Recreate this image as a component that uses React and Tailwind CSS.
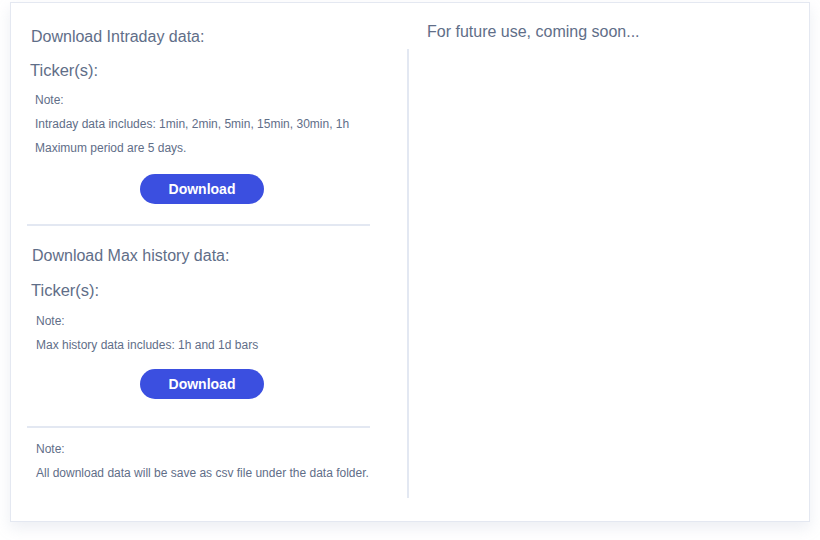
import React from 'react';

const font = { fontFamily: '"Liberation Sans", Arial, sans-serif' };

const DownloadButton = ({ className = '' }) => (
  <button
    className={`ml-[113px] w-[124px] h-[30px] rounded-full bg-[#3b4fe0] text-white text-[14px] font-bold ${className}`}
  >
    Download
  </button>
);

const App = () => {
  return (
    <div className="w-[820px] h-[540px] bg-white text-[#5f6e88]" style={font}>
      <div className="ml-[10px] mt-[2px] w-[800px] h-[520px] border border-[#e4e8f1] bg-white shadow-[0_6px_14px_rgba(150,160,190,0.18)] flex">
        {/* left column */}
        <div className="ml-[16px] w-[343px] flex flex-col">
          <div className="mt-[22px] pl-[4px] h-[24px] leading-[24px] text-[16px]">Download Intraday data:</div>
          <div className="mt-[8px] pl-[3px] h-[26px] leading-[26px] text-[16.5px]">Ticker(s):</div>
          <div className="mt-[5px] pl-[8px] text-[12px] leading-[24px]">
            <div>Note:</div>
            <div>Intraday data includes: 1min, 2min, 5min, 15min, 30min, 1h</div>
            <div>Maximum period are 5 days.</div>
          </div>
          <DownloadButton className="mt-[14px]" />
          <div className="mt-[20px] h-[2px] bg-[#e3e8f2]" />

          <div className="mt-[18px] pl-[5px] h-[24px] leading-[24px] text-[16px]">Download Max history data:</div>
          <div className="mt-[9px] pl-[4px] h-[26px] leading-[26px] text-[16.5px]">Ticker(s):</div>
          <div className="mt-[6px] pl-[9px] text-[12px] leading-[24px]">
            <div>Note:</div>
            <div>Max history data includes: 1h and 1d bars</div>
          </div>
          <DownloadButton className="mt-[12px]" />
          <div className="mt-[27px] h-[2px] bg-[#e3e8f2]" />

          <div className="mt-[9px] pl-[9px] text-[12px] leading-[24px] whitespace-nowrap">
            <div>Note:</div>
            <div>All download data will be save as csv file under the data folder.</div>
          </div>
        </div>

        {/* right column */}
        <div className="ml-[37px] flex-1 flex flex-col">
          <div className="mt-[17px] pl-[20px] h-[24px] leading-[24px] text-[16px]">For future use, coming soon...</div>
          <div className="mt-[5px] h-[449px] border-l-2 border-[#e3e8f2]" />
        </div>
      </div>
    </div>
  );
};

export default App;
